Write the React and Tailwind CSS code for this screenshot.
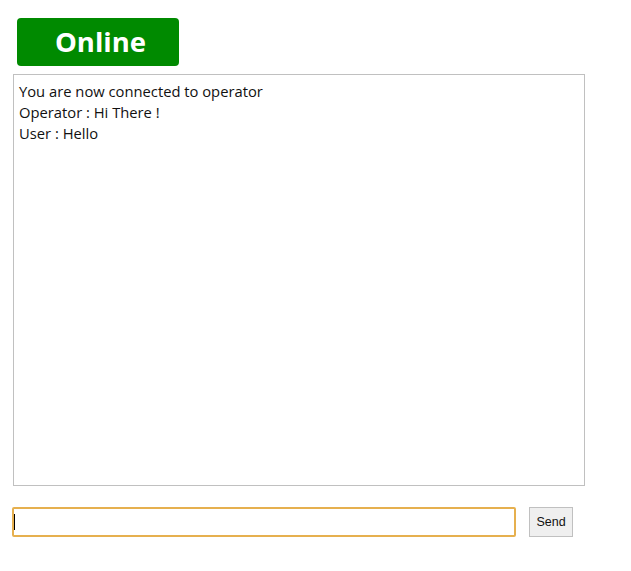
export default function App() {
  return (
    <div className="min-h-screen bg-white" style={{ fontFamily: '"Open Sans", sans-serif' }}>
      <div className="pt-[18px] pl-[17px]">
        <div className="flex h-[48px] w-[162px] items-center justify-center rounded-[4px] bg-[#008a00] pl-[5px] text-[27.5px] font-bold text-white">
          Online
        </div>
      </div>
      <div className="ml-[13px] mt-[8px] h-[412px] w-[572px] border border-[#c0c0c0] px-[5px] pt-[6px] text-[14.75px] leading-[21px] text-[#111]">
        <div>You are now connected to operator</div>
        <div>Operator : Hi There !</div>
        <div>User : Hello</div>
      </div>
      <div className="ml-[12px] mt-[21px] flex items-center gap-[13px]">
        <div className="relative">
          <input className="h-[30px] w-[504px] rounded-[2px] border-2 border-[#e6b04f] px-[1px] outline-none" />
          <span className="absolute left-[2px] top-[7px] h-[16px] w-[1px] bg-black" />
        </div>
        <button
          className="h-[30px] w-[44px] border border-[#c0c0c0] bg-[#efefef] text-[12.5px] text-[#111]"
          style={{ fontFamily: '"Liberation Sans", Arial, sans-serif' }}
        >
          Send
        </button>
      </div>
    </div>
  );
}
